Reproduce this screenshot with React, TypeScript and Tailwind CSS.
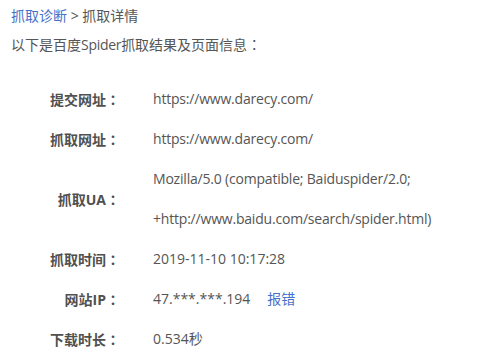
const rows: { label: string; lines: string[]; tight?: boolean; report?: boolean }[] = [
  { label: "提交网址", lines: ["https://www.darecy.com/"], tight: true },
  { label: "抓取网址", lines: ["https://www.darecy.com/"], tight: true },
  {
    label: "抓取UA",
    lines: [
      "Mozilla/5.0 (compatible; Baiduspider/2.0;",
      "+http://www.baidu.com/search/spider.html)",
    ],
    tight: true,
  },
  { label: "抓取时间", lines: ["2019-11-10 10:17:28"] },
  { label: "网站IP", lines: ["47.***.***.194"], report: true },
  { label: "下载时长", lines: ["0.534秒"] },
];

const Colon = () => (
  <span style={{ fontFamily: '"Noto Sans CJK JP", sans-serif' }}>：</span>
);

export default function App() {
  return (
    <div
      className="h-[358px] w-[478px] overflow-hidden bg-white pl-[11px] pt-[6px] text-[14px] text-[#555]"
      style={{ fontFamily: '"Open Sans", "Noto Sans CJK SC", sans-serif' }}
    >
      <div className="leading-[20px]">
        <span className="text-[#4a6fc9]">抓取诊断</span>
        <span> &gt; 抓取详情</span>
      </div>
      <div className="mt-[8px] leading-[20px]">
        以下是百度<span className="tracking-[-0.3px]">Spider</span>抓取结果及页面信息
        <Colon />
      </div>

      <div className="mt-[24px] flex flex-col">
        {rows.map((row) => (
          <div key={row.label} className="flex items-center">
            <div className="w-[109px] shrink-0 text-right font-bold text-[#505050]">
              {row.label}
              <Colon />
            </div>
            <div className={`ml-[33px] flex flex-col ${row.tight ? "tracking-[-0.2px]" : ""}`}>
              {row.lines.map((line) => (
                <div key={line} className="leading-[40px]">
                  {line}
                  {row.report && <span className="ml-[17px] text-[#4a6fc9]">报错</span>}
                </div>
              ))}
            </div>
          </div>
        ))}
      </div>
    </div>
  );
}
